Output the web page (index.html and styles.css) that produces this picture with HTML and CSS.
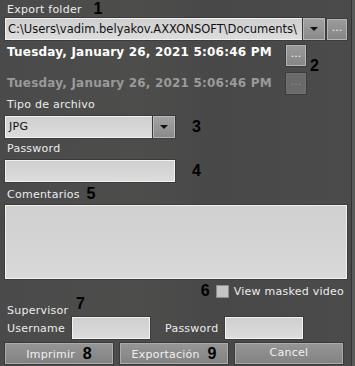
FILE: index.html
```html
<!DOCTYPE html>
<html lang="en">
<head>
  <meta charset="UTF-8" />
  <title>Export</title>
  <link rel="stylesheet" href="styles.css">
</head>
<body>
  <div class="panel">
    <div class="label first">Export folder <span class="mark mark-1">1</span></div>
    <div class="row path-row">
      <div class="field path">C:\Users\vadim.belyakov.AXXONSOFT\Documents\</div>
      <div class="drop"><span class="arrow"></span></div>
      <div class="dots">...</div>
    </div>

    <div class="dates">
      <div class="row date-row">
        <div class="date">Tuesday, January 26, 2021 5:06:46 PM</div>
        <div class="dots">...</div>
      </div>
      <div class="row date-row second">
        <div class="date off">Tuesday, January 26, 2021 5:06:46 PM</div>
        <div class="dots off">...</div>
      </div>
      <span class="mark mark-2">2</span>
    </div>

    <div class="label">Tipo de archivo</div>
    <div class="row">
      <div class="field select">JPG</div>
      <div class="drop"><span class="arrow"></span></div>
      <span class="mark mark-side">3</span>
    </div>

    <div class="label">Password</div>
    <div class="row">
      <div class="field pass"></div>
      <span class="mark mark-side">4</span>
    </div>

    <div class="label">Comentarios <span class="mark mark-5">5</span></div>
    <div class="field comments"></div>

    <div class="row check-row">
      <span class="mark">6</span>
      <span class="box"></span>
      <span class="check-text">View masked video</span>
    </div>

    <div class="label super">Supervisor <span class="mark mark-7">7</span></div>
    <div class="row cred-row">
      <span class="cred-label">Username</span>
      <div class="field cred"></div>
      <span class="cred-label pw">Password</span>
      <div class="field cred"></div>
    </div>

    <div class="row buttons">
      <div class="btn">Imprimir <span class="mark mark-btn">8</span></div>
      <div class="btn">Exportación <span class="mark mark-btn">9</span></div>
      <div class="btn">Cancel</div>
    </div>
  </div>
</body>
</html>
```

FILE: styles.css
```css
body {
  margin: 0;
  background: #5a5a5a;
  font-family: "DejaVu Sans", Verdana, sans-serif;
  font-size: 11px;
  letter-spacing: 0.25px;
  color: #ececec;
}

.panel {
  width: 346px;
  height: 366px;
  padding: 0 0 0 5px;
  background: linear-gradient(90deg, #4a4a4a 0%, #4d4d4c 40%, #484848 60%, #4b4b4b 100%);
  border-right: 1px solid #333;
  overflow: hidden;
}

.label {
  height: 16px;
  line-height: 16px;
  margin-top: 3px;
  margin-bottom: 3px;
  padding-left: 2px;
}

.label.first {
  margin-top: 0;
  margin-bottom: 2px;
}

.row {
  display: flex;
  align-items: center;
}

.mark {
  font-family: "Liberation Sans", Arial, sans-serif;
  font-weight: bold;
  font-size: 16px;
  letter-spacing: 0;
  color: #000;
}

.mark-1 { margin-left: 8px; position: relative; top: 1px; }
.mark-5 { margin-left: 3px; position: relative; top: 1px; }
.mark-7 { margin-left: 4px; position: relative; top: -5px; }
.mark-side { margin-left: 17px; }

.field {
  box-sizing: border-box;
  height: 22px;
  line-height: 20px;
  padding-left: 3px;
  color: #111;
  background: linear-gradient(#cfcfcf, #dcdcdc);
  border: 1px solid #f2f2f2;
  box-shadow: 0 0 0 1px #3c3c3c;
  white-space: nowrap;
  overflow: hidden;
}

.path {
  width: 298px;
  padding-left: 2px;
  font-size: 11.5px;
  letter-spacing: 0;
}

.drop {
  box-sizing: border-box;
  width: 22px;
  height: 22px;
  background: linear-gradient(#a2a2a2, #8a8a8a);
  border: 1px solid #b8b8b8;
  box-shadow: 0 0 0 1px #3c3c3c;
  display: flex;
  align-items: center;
  justify-content: center;
}

.arrow {
  width: 0;
  height: 0;
  border-left: 4px solid transparent;
  border-right: 4px solid transparent;
  border-top: 4px solid #111;
}

.dots {
  box-sizing: border-box;
  width: 20px;
  height: 21px;
  margin-left: 2px;
  line-height: 16px;
  letter-spacing: 0;
  text-align: center;
  color: #f4f4f4;
  background: linear-gradient(#9a9a9a, #868686);
  border: 1px solid #b4b4b4;
  box-shadow: 0 0 0 1px #3c3c3c;
}

.dots.off {
  color: #8a8a8a;
  background: #6a6a6a;
  border-color: #707070;
}

.dates {
  position: relative;
  margin-top: 5px;
}

.date-row {
  height: 21px;
  align-items: flex-start;
}

.date-row.second {
  margin-top: 7px;
}

.date {
  width: 277px;
  padding-left: 2px;
  font-weight: bold;
  font-size: 12px;
  letter-spacing: 0.2px;
  line-height: 14px;
  color: #fff;
}

.date.off {
  color: #9a9a9a;
  margin-top: 3px;
}

.mark-2 {
  position: absolute;
  left: 305px;
  top: 12px;
}

.select {
  width: 148px;
}

.pass {
  width: 170px;
}

.comments {
  width: 342px;
  height: 74px;
  margin-top: 4px;
  background: linear-gradient(#d0d0d0, #d8d8d8);
}

.check-row {
  justify-content: flex-end;
  margin-top: 4px;
  padding-right: 7px;
  height: 16px;
}

.box {
  box-sizing: border-box;
  width: 13px;
  height: 13px;
  margin: 0 5px 0 6px;
  background: #c4c4c4;
  border: 1px solid #8c8c8c;
}

.super {
  margin-top: 2px;
  margin-bottom: 0;
}

.cred-label {
  width: 65px;
  padding-left: 2px;
}

.cred-label.pw {
  width: 60px;
  margin-left: 15px;
  padding-left: 0;
}

.cred {
  width: 78px;
}

.buttons {
  margin-top: 4px;
  gap: 7px;
}

.btn {
  box-sizing: border-box;
  width: 108px;
  height: 21px;
  line-height: 18px;
  text-align: center;
  color: #f0f0f0;
  background: linear-gradient(#959595, #838383);
  border: 1px solid #ababab;
  box-shadow: 0 0 0 1px #3a3a3a;
}

.mark-btn {
  margin-left: 4px;
  position: relative;
  top: 1px;
}
```
